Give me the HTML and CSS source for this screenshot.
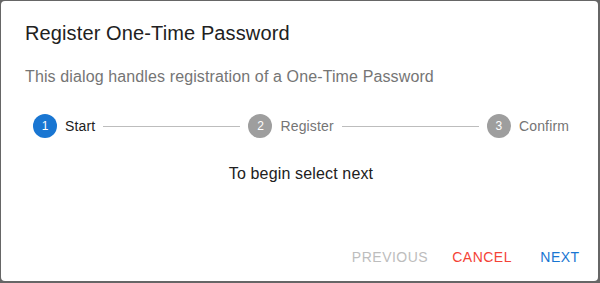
FILE: index.html
```html
<!DOCTYPE html>
<html lang="en">
<head>
  <meta charset="UTF-8">
  <title>Register One-Time Password</title>
  <link rel="stylesheet" href="styles.css">
</head>
<body>
<div class="dialog">
  <h2 class="dialog-title">Register One-Time Password</h2>

  <div class="dialog-content">
    <p class="dialog-text">This dialog handles registration of a One-Time Password</p>

    <div class="stepper">
      <div class="step active">
        <span class="step-icon">1</span>
        <span class="step-label">Start</span>
      </div>
      <div class="connector"></div>
      <div class="step">
        <span class="step-icon">2</span>
        <span class="step-label">Register</span>
      </div>
      <div class="connector"></div>
      <div class="step">
        <span class="step-icon">3</span>
        <span class="step-label">Confirm</span>
      </div>
    </div>

    <p class="step-content">To begin select next</p>
  </div>

  <div class="dialog-actions">
    <button class="btn" disabled>Previous</button>
    <button class="btn cancel">Cancel</button>
    <button class="btn next">Next</button>
  </div>
</div>
</body>
</html>
```

FILE: styles.css
```css
html, body {
  height: 100%;
}

body {
  margin: 0;
  padding: 1px 2px 2px 1px;
  box-sizing: border-box;
  background: #666;
  font-family: 'Liberation Sans', Arial, sans-serif;
}

.dialog {
  height: 100%;
  background: white;
  border-radius: 4px;
  display: flex;
  flex-direction: column;
}

.dialog-title {
  margin: 0;
  padding: 16px 24px;
  font-size: 20px;
  font-weight: 400;
  line-height: 32px;
  letter-spacing: 0.12px;
  color: #212121;
}

.dialog-content {
  padding: 0 21px 0 24px;
  flex: 1;
}

.dialog-text {
  margin: 0;
  font-size: 16px;
  line-height: 24px;
  letter-spacing: 0.12px;
  color: #757575;
}

.stepper {
  display: flex;
  align-items: center;
  padding: 25px 0 24px;
}

.step {
  display: flex;
  align-items: center;
  padding: 0 8px;
}

.step-icon {
  width: 24px;
  height: 24px;
  border-radius: 50%;
  background: #9e9e9e;
  color: white;
  font-size: 12px;
  line-height: 24px;
  text-align: center;
}

.step-label {
  padding-left: 8px;
  font-size: 14px;
  letter-spacing: 0.15px;
  color: #757575;
}

.step.active .step-icon { background: #1976d2; }
.step.active .step-label { color: #212121; }

.connector {
  flex: 1;
  border-top: 1px solid #bdbdbd;
}

.step-content {
  margin: 0;
  text-align: center;
  font-size: 16px;
  line-height: 24px;
  letter-spacing: 0.15px;
  color: #212121;
}

.dialog-actions {
  display: flex;
  justify-content: flex-end;
  padding: 10px 6px 6px 8px;
}

.btn {
  margin-left: 8px;
  min-width: 64px;
  padding: 6px 8px;
  border: none;
  background: none;
  font-family: inherit;
  font-size: 14px;
  line-height: 24.5px;
  letter-spacing: 0.5px;
  text-transform: uppercase;
  cursor: pointer;
}

.btn:disabled { color: #bdbdbd; cursor: default; }
.cancel { color: #f44336; }
.next { color: #1976d2; }
```
